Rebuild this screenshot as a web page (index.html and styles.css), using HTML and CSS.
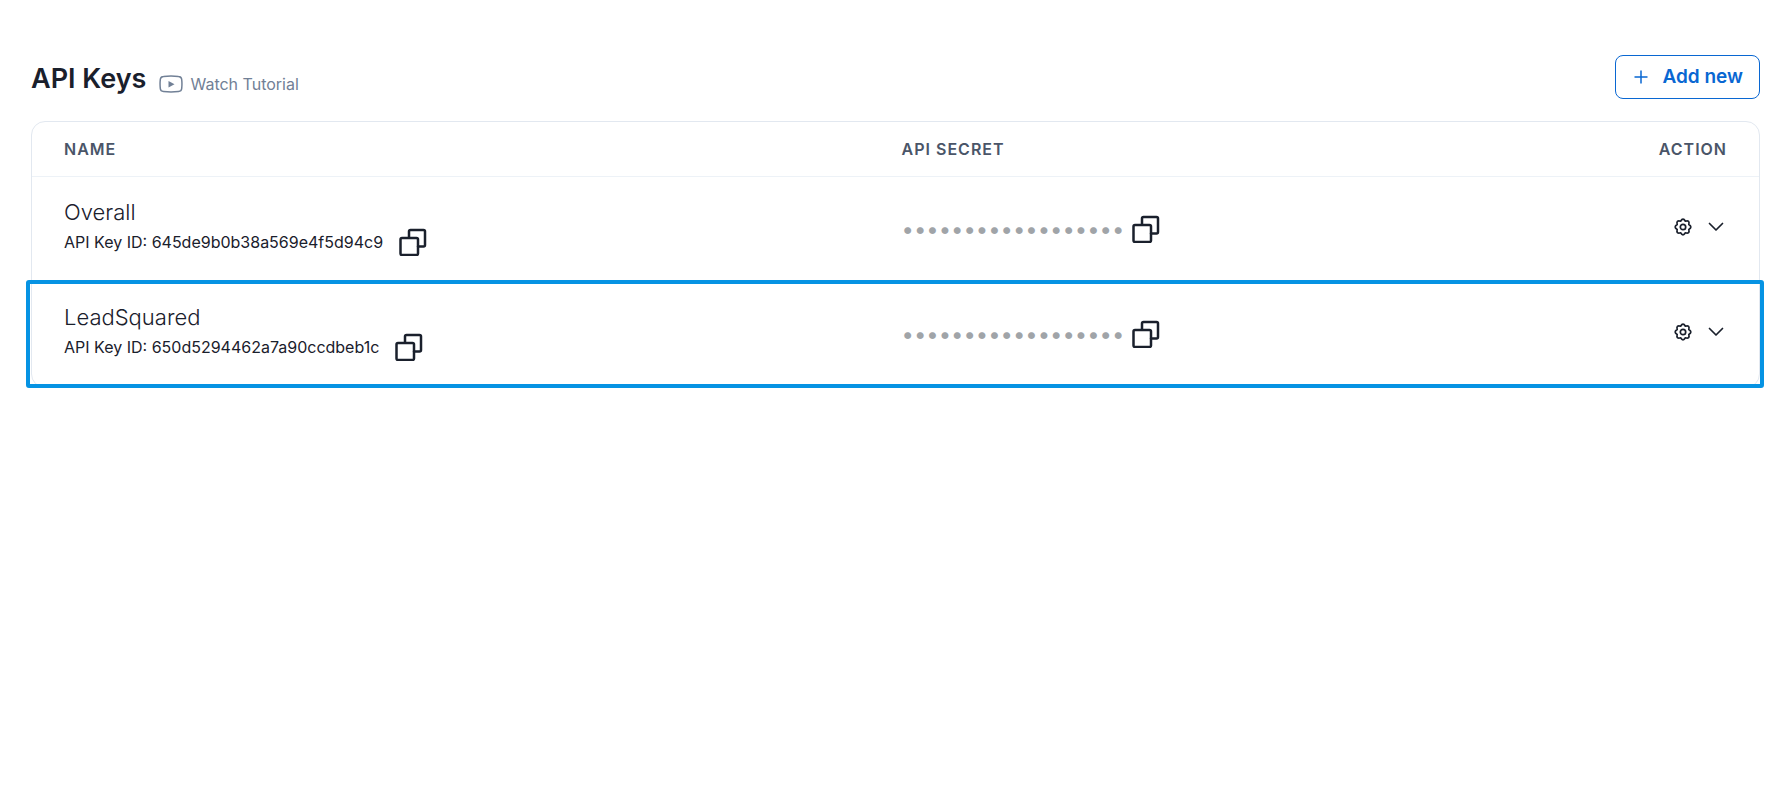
FILE: index.html
```html
<!DOCTYPE html>
<html lang="en">
<head>
    <meta charset="UTF-8">
    <meta name="viewport" content="width=device-width, initial-scale=1.0">
    <title>API Keys</title>
    <link rel="stylesheet" href="styles.css">
</head>
<body>
    <!-- shared icons -->
    <svg class="sprite" aria-hidden="true">
        <symbol id="icon-copy" viewBox="0 0 28 28">
            <path d="M10 9V3.500a1.500 1.500 0 0 1 1.500-1.500H24.500a1.500 1.500 0 0 1 1.500 1.500V17a1.500 1.500 0 0 1-1.500 1.500H19"/>
            <rect x="1.500" y="10" width="17.500" height="17" rx="1.500"/>
        </symbol>
        <symbol id="icon-gear" viewBox="0 0 18 18">
            <path d="M6.600 3.200Q9-.9 11.400 3.200Q16 2 14.800 6.600Q18.900 9 14.800 11.400Q16 16 11.400 14.800Q9 18.900 6.600 14.800Q2 16 3.200 11.400Q-.9 9 3.200 6.600Q2 2 6.600 3.200Z"/>
            <circle cx="9" cy="9" r="2.700"/>
        </symbol>
        <symbol id="icon-chevron" viewBox="0 0 16 10">
            <path d="M1.500 1.500 8 8l6.500-6.500"/>
        </symbol>
    </svg>

    <main class="page">
        <header class="page-header">
            <div class="heading">
                <h1>API Keys</h1>
                <a class="tutorial" href="#">
                    <svg class="icon-video" viewBox="0 0 24 18" aria-hidden="true">
                        <path class="frame" d="M4.500 1.500Q12 .7 19.500 1.500Q22.500 1.700 22.700 4.500Q23.200 9 22.700 13.500Q22.500 16.300 19.500 16.500Q12 17.300 4.500 16.500Q1.500 16.300 1.300 13.500Q.8 9 1.300 4.500Q1.500 1.700 4.500 1.500Z"/>
                        <path class="play" d="M9.500 6v6.500l6-3.200z"/>
                    </svg>
                    Watch Tutorial
                </a>
            </div>
            <button class="add-button" type="button">
                <svg class="icon-plus" viewBox="0 0 14 14" aria-hidden="true"><path d="M7 .5v13M.5 7h13"/></svg>
                Add new
            </button>
        </header>

        <div class="card">
            <table class="keys">
                <thead>
                    <tr>
                        <th class="col-name">Name</th>
                        <th class="col-secret">API Secret</th>
                        <th class="col-action">Action</th>
                    </tr>
                </thead>
                <tbody>
                    <tr>
                        <td>
                            <div class="key-name">Overall</div>
                            <div class="key-id">
                                <span>API Key ID: 645de9b0b38a569e4f5d94c9</span>
                                <button class="icon-button" type="button" aria-label="Copy key ID"><svg class="icon-copy"><use href="#icon-copy"/></svg></button>
                            </div>
                        </td>
                        <td>
                            <div class="secret">
                                <span class="dots">••••••••••••••••••</span>
                                <button class="icon-button" type="button" aria-label="Copy secret"><svg class="icon-copy"><use href="#icon-copy"/></svg></button>
                            </div>
                        </td>
                        <td>
                            <div class="actions">
                                <button class="icon-button" type="button" aria-label="Settings"><svg class="icon-gear"><use href="#icon-gear"/></svg></button>
                                <button class="icon-button" type="button" aria-label="Expand"><svg class="icon-chevron"><use href="#icon-chevron"/></svg></button>
                            </div>
                        </td>
                    </tr>
                    <tr class="selected">
                        <td>
                            <div class="key-name">LeadSquared</div>
                            <div class="key-id">
                                <span>API Key ID: 650d5294462a7a90ccdbeb1c</span>
                                <button class="icon-button" type="button" aria-label="Copy key ID"><svg class="icon-copy"><use href="#icon-copy"/></svg></button>
                            </div>
                        </td>
                        <td>
                            <div class="secret">
                                <span class="dots">••••••••••••••••••</span>
                                <button class="icon-button" type="button" aria-label="Copy secret"><svg class="icon-copy"><use href="#icon-copy"/></svg></button>
                            </div>
                        </td>
                        <td>
                            <div class="actions">
                                <button class="icon-button" type="button" aria-label="Settings"><svg class="icon-gear"><use href="#icon-gear"/></svg></button>
                                <button class="icon-button" type="button" aria-label="Expand"><svg class="icon-chevron"><use href="#icon-chevron"/></svg></button>
                            </div>
                        </td>
                    </tr>
                </tbody>
            </table>
        </div>
    </main>
</body>
</html>
```
FILE: styles.css
```css
* {
    box-sizing: border-box;
}

body {
    margin: 0;
    background: #fff;
    color: #1a202c;
    font-family: Inter, "Liberation Sans", sans-serif;
}

.sprite {
    position: absolute;
    width: 0;
    height: 0;
}

.page {
    padding: 55px 26px 40px 31px;
}

/* header */
.page-header {
    display: flex;
    justify-content: space-between;
    align-items: center;
    margin-bottom: 22px;
}

.heading {
    display: flex;
    align-items: flex-end;
    gap: 13px;
}

h1 {
    margin: 0;
    padding-top: 4px;
    font-size: 27px;
    line-height: 40px;
    font-weight: 600;
}

.tutorial {
    display: flex;
    align-items: center;
    gap: 7px;
    color: #718096;
    font-size: 16px;
    line-height: 30px;
    text-decoration: none;
}

.icon-video {
    width: 24px;
    height: 18px;
    fill: none;
}

.icon-video .frame {
    stroke: #718096;
    stroke-width: 1.5;
}

.icon-video .play {
    fill: #718096;
}

.add-button {
    display: flex;
    align-items: center;
    gap: 14px;
    height: 44px;
    padding: 0 16px 0 18px;
    border: 1px solid #0967d2;
    border-radius: 8px;
    background: #fff;
    color: #0967d2;
    font: 600 19px/24px Inter, "Liberation Sans", sans-serif;
    cursor: pointer;
}

.icon-plus {
    width: 14px;
    height: 14px;
    stroke: #0967d2;
    stroke-width: 1.5;
}

/* table */
.card {
    border: 1px solid #e2e8f0;
    border-radius: 14px;
}

.keys {
    width: 100%;
    border-spacing: 0;
    table-layout: fixed;
}

.keys th {
    height: 55px;
    padding: 0 32px;
    border-bottom: 1px solid #edf2f7;
    color: #4a5568;
    font-size: 16px;
    font-weight: 600;
    letter-spacing: 1px;
    text-align: left;
    text-transform: uppercase;
}

.keys .col-name {
    width: 48.5%;
}

.keys .col-action {
    width: 20%;
    text-align: right;
}

.keys td {
    height: 105px;
    padding: 0 32px 2px;
}

/* frame over the selected row and the card's edges */
.selected {
    position: relative;
}

.selected td:first-child::after {
    content: '';
    position: absolute;
    inset: -2px -5px -1px -6px;
    border: 4px solid #0693e3;
    border-radius: 3px;
    pointer-events: none;
}

.key-name {
    font-size: 22px;
    line-height: 28px;
    font-weight: 300;
}

.key-id {
    display: flex;
    align-items: center;
    gap: 16px;
    margin-bottom: 2px;
    height: 32px;
    font-size: 16px;
}

.secret {
    display: flex;
    align-items: center;
    gap: 8px;
}

.dots {
    color: #a0a4a8;
    font-size: 22px;
}

.actions {
    display: flex;
    justify-content: flex-end;
    align-items: center;
    gap: 16px;
    padding: 0 3px 4px 0;
}

.icon-button {
    display: flex;
    padding: 0;
    border: none;
    background: none;
    cursor: pointer;
}

.icon-button svg {
    fill: none;
    stroke: #1a202c;
    stroke-linecap: round;
    stroke-linejoin: round;
}

.icon-copy {
    width: 28px;
    height: 28px;
    stroke-width: 2.5;
}

.icon-gear {
    width: 18px;
    height: 18px;
    stroke-width: 1.7;
}

.icon-chevron {
    width: 16px;
    height: 10px;
    stroke-width: 1.7;
}
```
